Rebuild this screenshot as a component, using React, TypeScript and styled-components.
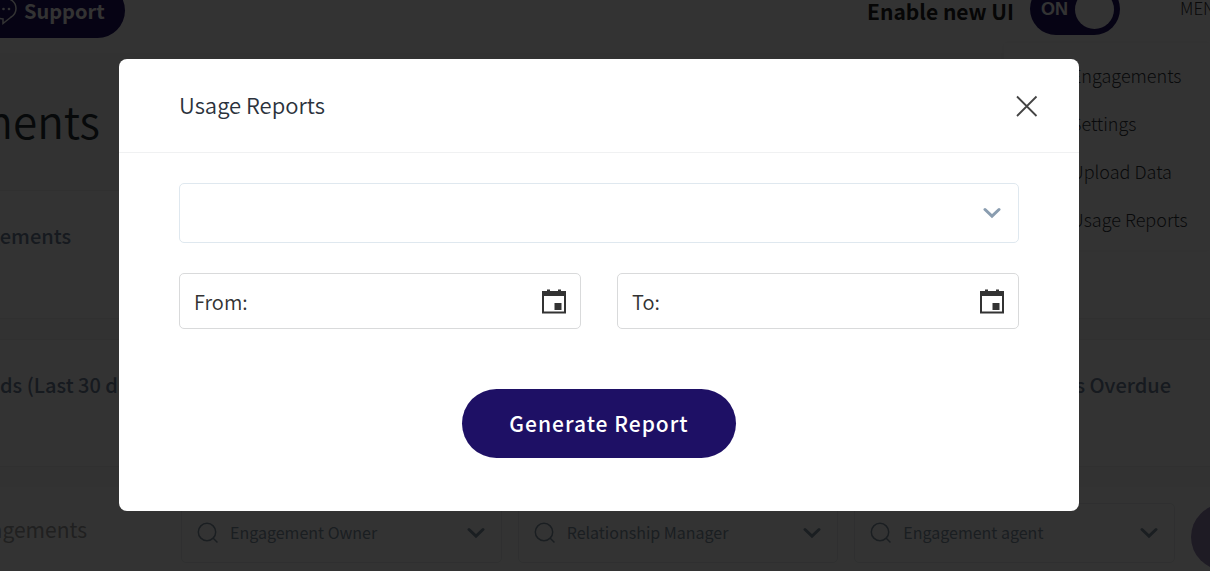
import React from "react";
import styled, { createGlobalStyle } from "styled-components";

const GlobalStyle = createGlobalStyle`
  *, *::before, *::after { box-sizing: border-box; }
  body {
    margin: 0;
    overflow: hidden;
    font-family: "Noto Sans CJK SC", "Noto Sans", sans-serif;
    background: #fff;
  }
  button, input, select { font: inherit; color: inherit; margin: 0; }
  a { color: inherit; text-decoration: none; }
  svg { display: block; flex: none; }
`;

const Page = styled.div`
  position: relative;
  height: 100vh;
  overflow: hidden;
  background: #f8f8f8;
`;

const TopBar = styled.header`
  display: flex;
  align-items: flex-start;
  height: 70px;
  margin-top: -17px;
  background: #fff;
  overflow: hidden;
`;

const SupportButton = styled.button`
  display: flex;
  align-items: center;
  gap: 7px;
  height: 55px;
  margin-left: -26px;
  padding: 0 20px 0 17px;
  border: 0;
  border-radius: 28px;
  background: #1e1065;
  color: #fff;
  font-size: 20px;
  font-weight: 700;
  line-height: 24px;
`;

const TopBarRight = styled.div`
  display: flex;
  align-items: flex-start;
  margin-left: auto;
`;

const SwitchLabel = styled.label`
  display: flex;
  gap: 16px;
  font-size: 21px;
  font-weight: 700;
  line-height: 56px;
  color: #222;
  white-space: nowrap;
`;

const Switch = styled.span`
  display: flex;
  align-items: center;
  justify-content: space-between;
  width: 90px;
  height: 52px;
  padding: 0 6px 0 11px;
  border-radius: 26px;
  background: #1e1065;
  color: #fff;
  font-family: "Liberation Sans", Arial, sans-serif;
  font-size: 18px;
  line-height: 24px;
`;

const SwitchInput = styled.input`
  appearance: none;
  width: 39px;
  height: 39px;
  border-radius: 50%;
  background: #fff;
`;

const MenuButton = styled.button`
  width: 90px;
  height: 50px;
  margin-right: -60px;
  padding: 0;
  border: 0;
  background: none;
  color: #333;
  font-size: 17px;
  font-weight: 300;
  line-height: 50px;
  text-align: left;
`;

const MenuSlot = styled.div`
  width: 90px;
  overflow: hidden;
  padding-left: 60px;
`;

const Menu = styled.nav`
  position: absolute;
  top: 43px;
  right: 0;
  display: flex;
  flex-direction: column;
  width: 206px;
  height: 207px;
  padding: 8px 0 0 67px;
  background: #fff;
  box-shadow: 0 0 6px rgba(0, 0, 0, 0.06);
  color: #30343a;
  font-size: 18px;
  font-weight: 300;
  line-height: 48px;
  white-space: nowrap;
`;

const Clip = styled.div<{ $width: number }>`
  display: flex;
  justify-content: flex-end;
  flex: none;
  width: ${(p) => p.$width}px;
  white-space: nowrap;
`;

const TitleBand = styled.div`
  height: 137px;
  padding-top: 37px;
`;

const Title = styled.h1`
  margin: 0;
  font-size: 44px;
  font-weight: 350;
  line-height: 60px;
  color: #232d32;
`;

const Card = styled.section<{ $height: number }>`
  display: flex;
  justify-content: space-between;
  height: ${(p) => p.$height}px;
  margin-bottom: 20px;
  padding: 29px 39px 0 0;
  border: solid #f1f1f1;
  border-width: 1px 0;
  background: #fff;
`;

const CardTitle = styled.h2`
  margin: 0;
  font-size: 20px;
  font-weight: 500;
  line-height: 32px;
  color: #70809a;
  white-space: nowrap;
`;

const FilterBar = styled.section`
  display: flex;
  align-items: flex-start;
  height: 84px;
  padding-top: 16px;
  background: #fff;
`;

const FilterTitle = styled.h3`
  margin: 0;
  font-size: 21px;
  font-weight: 400;
  line-height: 52px;
  color: #a0a0a0;
`;

const Filters = styled.div`
  display: grid;
  grid-template-columns: repeat(3, 1fr);
  gap: 16px;
  flex: 1;
  margin: 0 16px 0 94px;
`;

const Filter = styled.label`
  display: flex;
  align-items: center;
  gap: 11px;
  height: 60px;
  padding: 0 16px 0 15px;
  border: 1px solid #e8ecef;
  border-radius: 5px;
  color: #8496a6;
`;

const FilterInput = styled.input`
  flex: 1;
  min-width: 0;
  padding: 0 0 3px;
  border: 0;
  background: none;
  font-size: 16px;
  line-height: 24px;
  &::placeholder { color: #8496a6; opacity: 1; }
`;

const RoundButton = styled.button`
  flex: none;
  width: 66px;
  height: 66px;
  margin: 1px -47px 0 0;
  border: 0;
  border-radius: 50%;
  background: #9585b5;
`;

const Overlay = styled.div`
  position: fixed;
  inset: 0;
  display: flex;
  align-items: center;
  justify-content: center;
  padding: 0 12px 2px 0;
  background: rgba(0, 0, 0, 0.8);
`;

const Dialog = styled.div`
  width: 100%;
  max-width: 960px;
  border-radius: 8px;
  background: #fff;
  color: #333;
`;

const DialogHeader = styled.header`
  display: flex;
  align-items: center;
  justify-content: space-between;
  height: 94px;
  padding: 0 40px 0 60px;
  border-bottom: 1px solid #f0f1f2;
`;

const DialogTitle = styled.h2`
  margin: 0;
  padding-bottom: 2px;
  font-size: 22px;
  font-weight: 350;
  line-height: 32px;
  color: #2b323c;
`;

const CloseButton = styled.button`
  padding: 2px 0 0;
  border: 0;
  background: none;
  color: #444;
`;

const DialogBody = styled.form`
  display: flex;
  flex-direction: column;
  padding: 30px 60px 53px;
`;

const SelectBox = styled.div`
  display: grid;
  align-items: center;
  > * { grid-area: 1 / 1; }
  > svg { justify-self: end; margin-right: 18px; color: #8a9db0; pointer-events: none; }
`;

const Select = styled.select`
  appearance: none;
  width: 100%;
  height: 60px;
  padding: 0 48px 0 15px;
  border: 1px solid #dfe8ef;
  border-radius: 5px;
  background: #fff;
  font-size: 20px;
`;

const DateRow = styled.div`
  display: grid;
  grid-template-columns: 1fr 1fr;
  gap: 36px;
  margin: 30px 0 60px;
`;

const DateField = styled.div`
  display: flex;
  align-items: center;
  gap: 8px;
  height: 56px;
  padding: 1px 14px 0;
  border: 1px solid #d9dadb;
  border-radius: 5px;
  font-size: 20px;
  font-weight: 350;
  line-height: 28px;
`;

const DateLabel = styled.label`
  padding-top: 2px;
`;

const DateInput = styled.input`
  flex: 1;
  min-width: 0;
  padding: 0;
  border: 0;
  background: none;
`;

const IconButton = styled.button`
  padding: 0;
  border: 0;
  background: none;
`;

const SubmitButton = styled.button`
  align-self: center;
  height: 69px;
  padding: 0 47px;
  border: 0;
  border-radius: 35px;
  background: #1e1065;
  color: #fff;
  font-size: 21px;
  font-weight: 500;
  line-height: 28px;
  letter-spacing: 1px;
`;

const Chevron = () => (
  <svg width="18" height="12" viewBox="0 0 18 12" fill="none" stroke="currentColor" strokeWidth="3" strokeLinecap="round" strokeLinejoin="miter">
    <path d="M2 2.500 9 9.200l7-6.700" />
  </svg>
);

const SearchIcon = () => (
  <svg width="22" height="22" viewBox="0 0 22 22" fill="none" stroke="currentColor" strokeWidth="1.500">
    <circle cx="10" cy="10" r="8.700" />
    <path d="m16 16 4.500 4.500" />
  </svg>
);

const CalendarIcon = () => (
  <svg width="24" height="25" viewBox="0 0 24 25" fill="#333">
    <path fillRule="evenodd" d="M0 2h5V0.500h3V2h8V0.500h3V2h5v22.500H0ZM2 7v15.500h20V7Z" />
    <path d="M12.500 14h7v7h-7z" />
  </svg>
);

const CloseIcon = () => (
  <svg width="24" height="24" viewBox="0 0 24 24" fill="none" stroke="currentColor" strokeWidth="1.800">
    <path d="m2 2.500 19.500 19.500M21.500 2.500 2 22" />
  </svg>
);

const SpeechIcon = () => (
  <svg width="26" height="30" viewBox="0 0 26 30" fill="none" stroke="currentColor" strokeWidth="1.500">
    <path d="M13 2c7 0 12 4.500 12 10.500 0 4-2 7-5.500 9L12 27.500V23C5.500 22.500 1 18.500 1 12.500S6 2 13 2Z" />
    <g fill="currentColor" stroke="none">
      <circle cx="7.500" cy="13" r="1.300" />
      <circle cx="12.500" cy="13" r="1.300" />
      <circle cx="18" cy="13" r="1.300" />
    </g>
  </svg>
);

const menuItems = ["Engagements", "Settings", "Upload Data", "Usage Reports"];
const filters = ["Engagement Owner", "Relationship Manager", "Engagement agent"];

export default function App() {
  return (
    <>
      <GlobalStyle />
      <Page>
        <TopBar>
          <SupportButton type="button">
            <SpeechIcon />
            Support
          </SupportButton>
          <TopBarRight>
            <SwitchLabel>
              Enable new UI
              <Switch>
                ON
                <SwitchInput type="checkbox" role="switch" defaultChecked />
              </Switch>
            </SwitchLabel>
            <MenuSlot>
              <MenuButton type="button">MENU</MenuButton>
            </MenuSlot>
          </TopBarRight>
        </TopBar>

        <TitleBand>
          <Clip $width={100}>
            <Title>Engagements</Title>
          </Clip>
        </TitleBand>
        <Card $height={129}>
          <Clip $width={71}>
            <CardTitle>Engagements</CardTitle>
          </Clip>
        </Card>
        <Card $height={128}>
          <CardTitle>ds (Last 30 days)</CardTitle>
          <CardTitle>Engagements Overdue</CardTitle>
        </Card>
        <FilterBar>
          <Clip $width={87}>
            <FilterTitle>Engagements</FilterTitle>
          </Clip>
          <Filters>
            {filters.map((name) => (
              <Filter key={name}>
                <SearchIcon />
                <FilterInput type="text" placeholder={name} aria-label={name} />
                <Chevron />
              </Filter>
            ))}
          </Filters>
          <RoundButton type="button" aria-label="Search" />
        </FilterBar>

        <Menu>
          {menuItems.map((item) => (
            <a key={item} href="#">{item}</a>
          ))}
        </Menu>
      </Page>

      <Overlay>
        <Dialog role="dialog" aria-modal="true" aria-labelledby="dialog-title">
          <DialogHeader>
            <DialogTitle id="dialog-title">Usage Reports</DialogTitle>
            <CloseButton type="button" aria-label="Close">
              <CloseIcon />
            </CloseButton>
          </DialogHeader>
          <DialogBody onSubmit={(e) => e.preventDefault()}>
            <SelectBox>
              <Select aria-label="Report type" defaultValue="">
                <option value="" />
              </Select>
              <Chevron />
            </SelectBox>
            <DateRow>
              <DateField>
                <DateLabel htmlFor="from">From:</DateLabel>
                <DateInput id="from" type="text" />
                <IconButton type="button" aria-label="Choose start date">
                  <CalendarIcon />
                </IconButton>
              </DateField>
              <DateField>
                <DateLabel htmlFor="to">To:</DateLabel>
                <DateInput id="to" type="text" />
                <IconButton type="button" aria-label="Choose end date">
                  <CalendarIcon />
                </IconButton>
              </DateField>
            </DateRow>
            <SubmitButton type="submit">Generate Report</SubmitButton>
          </DialogBody>
        </Dialog>
      </Overlay>
    </>
  );
}
